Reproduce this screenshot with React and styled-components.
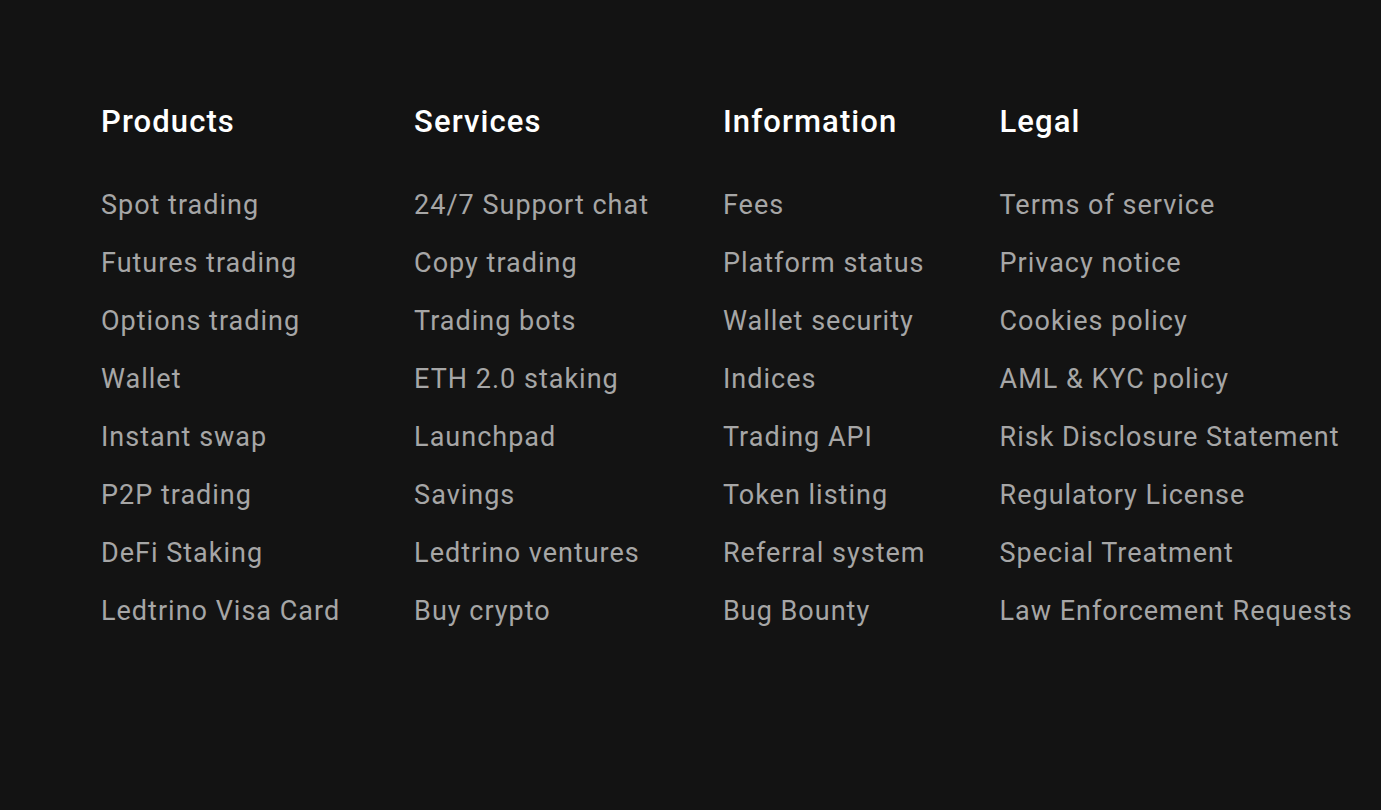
import React from "react";
import styled, { createGlobalStyle } from "styled-components";

const columns = [
  {
    title: "Products",
    links: ["Spot trading", "Futures trading", "Options trading", "Wallet", "Instant swap", "P2P trading", "DeFi Staking", "Ledtrino Visa Card"],
  },
  {
    title: "Services",
    links: ["24/7 Support chat", "Copy trading", "Trading bots", "ETH 2.0 staking", "Launchpad", "Savings", "Ledtrino ventures", "Buy crypto"],
  },
  {
    title: "Information",
    links: ["Fees", "Platform status", "Wallet security", "Indices", "Trading API", "Token listing", "Referral system", "Bug Bounty"],
  },
  {
    title: "Legal",
    links: ["Terms of service", "Privacy notice", "Cookies policy", "AML & KYC policy", "Risk Disclosure Statement", "Regulatory License", "Special Treatment", "Law Enforcement Requests"],
  },
];

function App() {
  return (
    <>
      <GlobalStyle />
      <Footer>
        <Columns>
          {columns.map((col) => (
            <Column key={col.title}>
              <Heading>{col.title}</Heading>
              <LinkList>
                {col.links.map((link) => (
                  <li key={link}>
                    <FooterLink href="#">{link}</FooterLink>
                  </li>
                ))}
              </LinkList>
            </Column>
          ))}
        </Columns>
      </Footer>
    </>
  );
}

const GlobalStyle = createGlobalStyle`
  html, body {
    margin: 0;
    padding: 0;
    background: #131313;
  }
  body {
    font-family: Roboto, "Liberation Sans", Arial, sans-serif;
  }
`;

const Footer = styled.footer`
  background: #131313;
  min-height: 810px;
  box-sizing: border-box;
  padding: 103px 0 0 101px;
`;

const Columns = styled.div`
  display: flex;
  align-items: flex-start;
  gap: 74px;
`;

const Column = styled.div`
  display: flex;
  flex-direction: column;
  flex-shrink: 0;
`;

const Heading = styled.h3`
  margin: 0;
  color: #ffffff;
  font-size: 31px;
  font-weight: 500;
  line-height: 38px;
  letter-spacing: 1.1px;
  white-space: nowrap;
`;

const LinkList = styled.ul`
  list-style: none;
  margin: 35px 0 0;
  padding: 0;
`;

const FooterLink = styled.a`
  display: block;
  color: #a6a6a6;
  font-size: 27px;
  line-height: 58px;
  letter-spacing: 1px;
  text-decoration: none;
  white-space: nowrap;
`;

export default App;
